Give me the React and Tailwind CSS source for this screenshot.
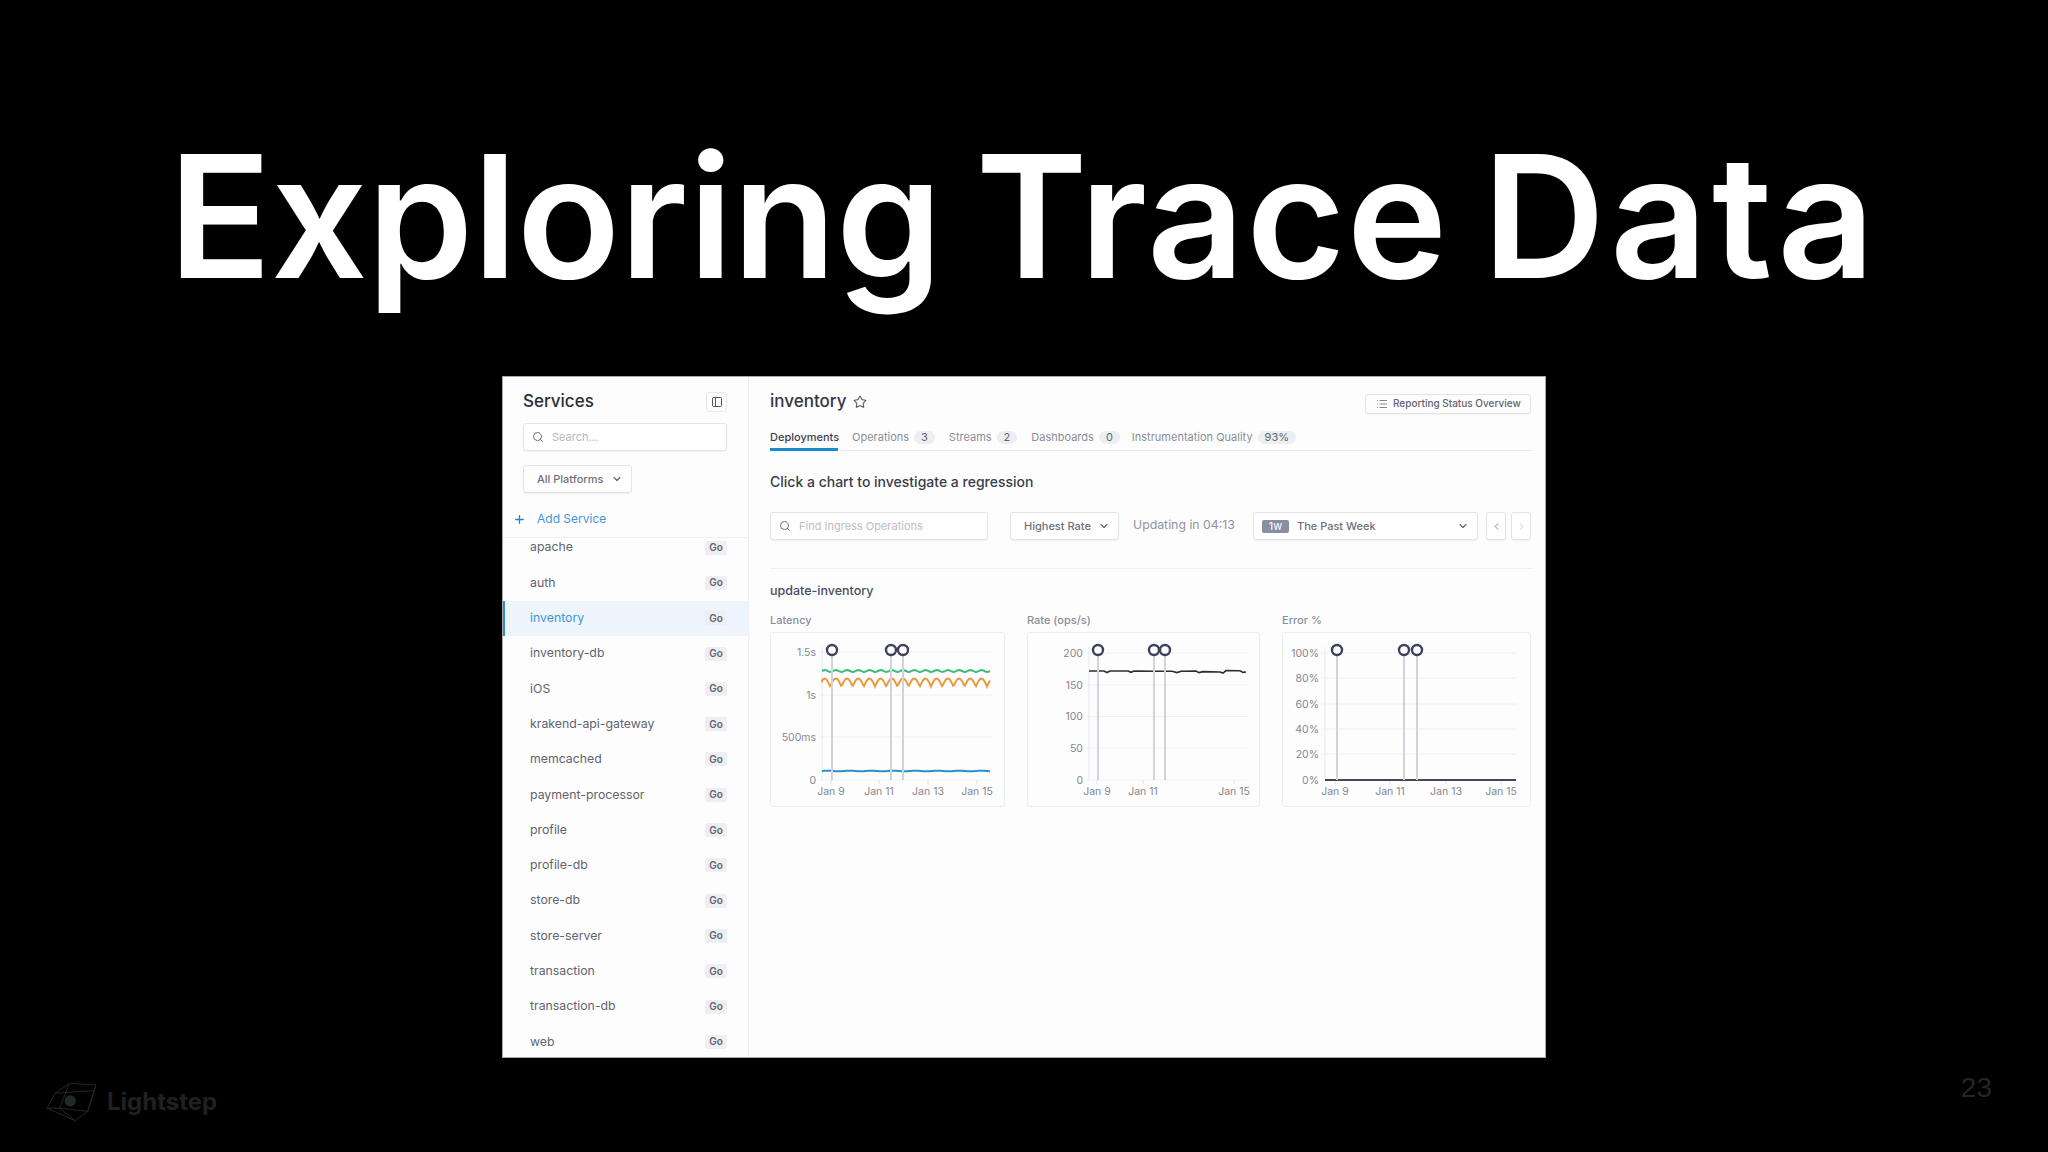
import React from 'react';
import { Search, ChevronDown, ChevronLeft, ChevronRight, Star, List, Plus, PanelLeft } from 'lucide-react';

const services = [
  'apache', 'auth', 'inventory', 'inventory-db', 'iOS', 'krakend-api-gateway', 'memcached',
  'payment-processor', 'profile', 'profile-db', 'store-db', 'store-server', 'transaction',
  'transaction-db', 'web',
];

const tabs = [
  { label: 'Operations', count: '3' },
  { label: 'Streams', count: '2' },
  { label: 'Dashboards', count: '0' },
  { label: 'Instrumentation Quality', count: '93%' },
];

// wavy series, x in page pixels
const wave = (x0, x1, y, amp, period) => {
  let d = `M${x0} ${y}`;
  for (let x = x0; x <= x1; x += 1) {
    const s = Math.sin(((x - x0) / period) * Math.PI * 2);
    d += ` L${x} ${(y - amp * s).toFixed(2)}`;
  }
  return d;
};

const orange = (x0, x1, y, amp, period) => {
  let d = `M${x0} ${y}`;
  for (let x = x0; x <= x1; x += 1) {
    const s = Math.abs(Math.sin(((x - x0 + 3) / period) * Math.PI));
    d += ` L${x} ${(y + amp - 2 * amp * s).toFixed(2)}`;
  }
  return d;
};

const Chart = ({ box, axisX, right, grid, marks, xTicks, children }) => (
  <svg className="w-full h-full block" viewBox={box} fontFamily="Inter, sans-serif" fontSize="10.5">
    {grid.map(([label, y]) => (
      <g key={label}>
        <line x1={axisX - 3} x2={right} y1={y} y2={y} stroke="#eef0f4" />
        <text x={axisX - 6} y={y + 3.5} textAnchor="end" fill="#85878f">{label}</text>
      </g>
    ))}
    <line x1={axisX} x2={axisX} y1="647" y2="780" stroke="#e6e8ed" />
    {xTicks.map(([label, x]) => (
      <g key={label}>
        <line x1={x} x2={x} y1="780" y2="784" stroke="#dfe1e7" />
        <text x={x} y="795" textAnchor="middle" fill="#85878f">{label}</text>
      </g>
    ))}
    {children}
    {marks.map((x) => (
      <g key={x}>
        <line x1={x} x2={x} y1="655" y2="780" stroke="#d0d3da" strokeWidth="2" />
        <circle cx={x} cy="650" r="5" fill="#fff" stroke="#3f4160" strokeWidth="2.4" />
      </g>
    ))}
  </svg>
);

const Select = ({ className, children }) => (
  <div className={`flex items-center h-full bg-white border border-[#e2e4e9] rounded-[3px] shadow-[0_1px_1px_rgba(0,0,0,0.05)] ${className}`}>
    {children}
  </div>
);

const Sidebar = () => (
  <div className="w-[246px] shrink-0 flex flex-col border-r border-[#eff0f3] overflow-hidden">
    <div className="pl-5 pr-[21px] shrink-0">
      <div className="flex items-center justify-between h-5 mt-[15px]">
        <span className="text-[17px] font-medium text-[#2b2e38] -mt-px">Services</span>
        <div className="w-[21px] h-5 flex items-center justify-center border border-[#e6e7eb] rounded-[3px]">
          <PanelLeft size={12} color="#50535f" strokeWidth={2} />
        </div>
      </div>
      <div className="h-7 mt-[11px]">
        <Select className="px-2">
          <Search size={12} color="#6f717a" strokeWidth={2} />
          <span className="ml-[8px] text-[11px] text-[#b5b7be]">Search...</span>
        </Select>
      </div>
      <div className="h-7 mt-[14px] w-[109px]">
        <Select className="pl-[13px] pr-[8px]">
          <span className="text-[11px] font-medium text-[#6d6f7a]">All Platforms</span>
          <ChevronDown size={12} color="#5f616c" strokeWidth={2.2} className="ml-auto" />
        </Select>
      </div>
      <div className="flex items-center h-[18px] mt-[17px] -ml-[10px]">
        <Plus size={13} color="#2f7fbe" strokeWidth={2.4} />
        <span className="ml-[11px] text-[12px] text-[#3f97d3]">Add Service</span>
      </div>
    </div>
    <div className="mt-[9px] border-t border-[#f0f1f4] overflow-hidden flex-1">
      <div className="-mt-[8px]">
        {services.map((name) => {
          const active = name === 'inventory';
          return (
            <div
              key={name}
              className={`h-[35.3px] flex items-center justify-between pr-[21px] ${active ? 'bg-[#eef5fc] border-l-2 border-[#2a8fd0] pl-[25px]' : 'pl-[27px]'}`}
            >
              <span className={`text-[12.3px] ${active ? 'text-[#3f97d3]' : 'text-[#62646e]'}`}>{name}</span>
              <span className="w-[22px] h-[14px] flex items-center justify-center rounded-[2px] bg-[#eeeff3] text-[10px] font-semibold text-[#62646e]">Go</span>
            </div>
          );
        })}
      </div>
    </div>
  </div>
);

const Main = () => (
  <div className="flex-1 flex flex-col pl-[21px] pr-[12px] min-w-0">
    <div className="flex items-center justify-between h-5 mt-[16px] pr-[2px]">
      <div className="flex items-center gap-[7px] -mt-[2px]">
        <span className="text-[17px] font-medium text-[#333645]">inventory</span>
        <Star size={14} color="#55586a" strokeWidth={1.8} />
      </div>
      <div className="flex items-center w-[166px] h-5 mt-[1px] px-[10px] gap-[5px] border border-[#e4e5ea] rounded-[3px] shadow-[0_1px_1px_rgba(0,0,0,0.04)]">
        <List size={12} color="#62646e" strokeWidth={1.6} className="shrink-0" />
        <span className="text-[10px] font-medium text-[#62646e] whitespace-nowrap">Reporting Status Overview</span>
      </div>
    </div>

    <div className="flex items-start h-[23px] mt-[15px] border-b border-[#e9ebef] text-[11px]">
      <div className="h-[23px] w-[68px] pt-[1px] border-b-[3px] border-[#1a8ad0] font-medium text-[#3c3f4e] whitespace-nowrap">Deployments</div>
      {tabs.map((t) => (
        <div key={t.label} className="flex items-center ml-[14px] first:ml-[15px] last:ml-[12px] pt-[1px] h-[18px] text-[#8b8d96] whitespace-nowrap">
          <span>{t.label}</span>
          <span className="ml-[5px] px-[7px] h-[13px] leading-[13px] rounded-full bg-[#eceef2] text-[11px] text-[#62646e]">{t.count}</span>
        </div>
      ))}
    </div>

    <div className="mt-[22px] h-[18px] leading-[18px] text-[14px] font-medium text-[#3a3d49]">Click a chart to investigate a regression</div>

    <div className="flex items-center h-7 mt-[21px]">
      <div className="w-[218px] h-full">
        <Select className="px-2">
          <Search size={12} color="#6f717a" strokeWidth={2} />
          <span className="ml-[8px] text-[11px] text-[#bbbdc4]">Find Ingress Operations</span>
        </Select>
      </div>
      <div className="w-[109px] h-full ml-[22px]">
        <Select className="pl-[13px] pr-[8px]">
          <span className="text-[11px] font-medium text-[#6d6f7a]">Highest Rate</span>
          <ChevronDown size={12} color="#5f616c" strokeWidth={2.2} className="ml-auto" />
        </Select>
      </div>
      <span className="w-[120px] ml-[14px] -mt-[2px] text-[12.3px] text-[#91939c] whitespace-nowrap">Updating in 04:13</span>
      <div className="w-[225px] h-full">
        <Select className="pl-2 pr-[8px]">
          <span className="w-[27px] h-[13px] flex items-center justify-center rounded-[2px] bg-[#8a8ea3] text-[11px] text-white">1w</span>
          <span className="ml-[8px] text-[11px] font-medium text-[#6d6f7a]">The Past Week</span>
          <ChevronDown size={12} color="#5f616c" strokeWidth={2.2} className="ml-auto" />
        </Select>
      </div>
      <div className="w-5 h-full ml-[8px]">
        <Select className="justify-center">
          <ChevronLeft size={11} color="#777983" strokeWidth={2} />
        </Select>
      </div>
      <div className="w-5 h-full ml-[5px]">
        <Select className="justify-center">
          <ChevronRight size={11} color="#c2c4ca" strokeWidth={2} />
        </Select>
      </div>
    </div>

    <div className="h-px mt-[28px] bg-[#eff0f3]" />
    <div className="mt-[14px] h-4 leading-4 text-[12.5px] font-medium text-[#4a4d63]">update-inventory</div>

    <div className="flex gap-[22px] mt-[13px]">
      <div className="w-[235px]">
        <div className="h-4 leading-4 mb-1 text-[11px] font-medium text-[#8b8d96]">Latency</div>
        <div className="h-[175px] border border-[#eceef1] rounded-[3px] overflow-hidden">
          <Chart
            box="771 633 233 173"
            axisX={822}
            right={993}
            grid={[['1.5s', 652], ['1s', 695], ['500ms', 737], ['0', 780]]}
            marks={[832, 891, 903]}
            xTicks={[['Jan 9', 831], ['Jan 11', 879], ['Jan 13', 928], ['Jan 15', 977]]}
          >
            <path d={wave(822, 990, 671, 0.9, 11.2)} fill="none" stroke="#3dbb78" strokeWidth="2" />
            <path d={orange(822, 990, 682.5, 4, 11.2)} fill="none" stroke="#ec9a3e" strokeWidth="2" />
            <path d={wave(822, 990, 771, 0.3, 22)} fill="none" stroke="#2a8fd0" strokeWidth="2" />
          </Chart>
        </div>
      </div>
      <div className="w-[233px]">
        <div className="h-4 leading-4 mb-1 text-[11px] font-medium text-[#8b8d96]">Rate (ops/s)</div>
        <div className="h-[175px] border border-[#eceef1] rounded-[3px] overflow-hidden">
          <Chart
            box="1028 633 231 173"
            axisX={1089}
            right={1248}
            grid={[['200', 653], ['150', 685], ['100', 716.5], ['50', 748], ['0', 780]]}
            marks={[1098, 1154, 1165]}
            xTicks={[['Jan 9', 1097], ['Jan 11', 1143], ['Jan 15', 1234]]}
          >
            <path
              d="M1089 671 L1104 671 L1107 672.5 L1110 671 L1128 671 L1131 672.3 L1134 671 L1156 671.3 L1172 671.3 L1177 672.6 L1181 671.3 L1196 671 L1199 672.6 L1203 671.6 L1220 672 L1223 673 L1226 670.6 L1240 670.8 L1243 672.4 L1246 672"
              fill="none"
              stroke="#2c2c33"
              strokeWidth="1.6"
            />
          </Chart>
        </div>
      </div>
      <div className="w-[249px]">
        <div className="h-4 leading-4 mb-1 text-[11px] font-medium text-[#8b8d96]">Error %</div>
        <div className="h-[175px] border border-[#eceef1] rounded-[3px] overflow-hidden">
          <Chart
            box="1283 633 247 173"
            axisX={1325}
            right={1517}
            grid={[['100%', 653], ['80%', 678], ['60%', 704], ['40%', 729], ['20%', 754], ['0%', 780]]}
            marks={[1337, 1404, 1417]}
            xTicks={[['Jan 9', 1335], ['Jan 11', 1390], ['Jan 13', 1446], ['Jan 15', 1501]]}
          >
            <line x1="1325" x2="1516" y1="780" y2="780" stroke="#44465a" strokeWidth="2.2" />
          </Chart>
        </div>
      </div>
    </div>
  </div>
);

const App = () => (
  <div className="w-full h-[1152px] bg-black flex flex-col items-center overflow-hidden font-['Inter',sans-serif]">
    <h1 className="mt-[131px] h-[170px] leading-[170px] text-[170px] font-semibold text-white whitespace-nowrap [word-spacing:-9px]">
      <span className="tracking-[-0.5px]">Exploring</span>{' '}
      <span className="tracking-[1.5px]">Trace</span>{' '}
      <span className="tracking-[4.5px]">Data</span>
    </h1>

    <div className="mt-[75px] w-[1044px] h-[682px] shrink-0 flex bg-[#fdfdfe] border border-[#a8a8a8] overflow-hidden">
      <Sidebar />
      <Main />
    </div>

    <div className="w-full flex-1 flex items-start justify-between">
      <div className="flex items-center pl-[47px] pt-[25px]">
        <svg width="49" height="38" viewBox="80 75 148 113" fill="none" stroke="#2b2e30" strokeWidth="2.5" strokeLinejoin="round">
          <path d="M80 150 L105 105 L148 75 L228 80 L203 160 L165 188 Z" />
          <path d="M105 105 L220 97 M148 75 L118 150 L165 188 M80 150 L118 150 L203 160 M228 80 L203 160" />
          <circle cx="150" cy="128" r="17" fill="#23282b" stroke="none" />
        </svg>
        <span className="ml-[11px] text-[24px] font-bold leading-none text-[#1d2124]">Lightstep</span>
      </div>
      <span className="pt-[16px] pr-[56px] text-[28px] leading-[28px] text-[#222528] font-['Liberation_Sans',sans-serif]">23</span>
    </div>
  </div>
);

export default App;
